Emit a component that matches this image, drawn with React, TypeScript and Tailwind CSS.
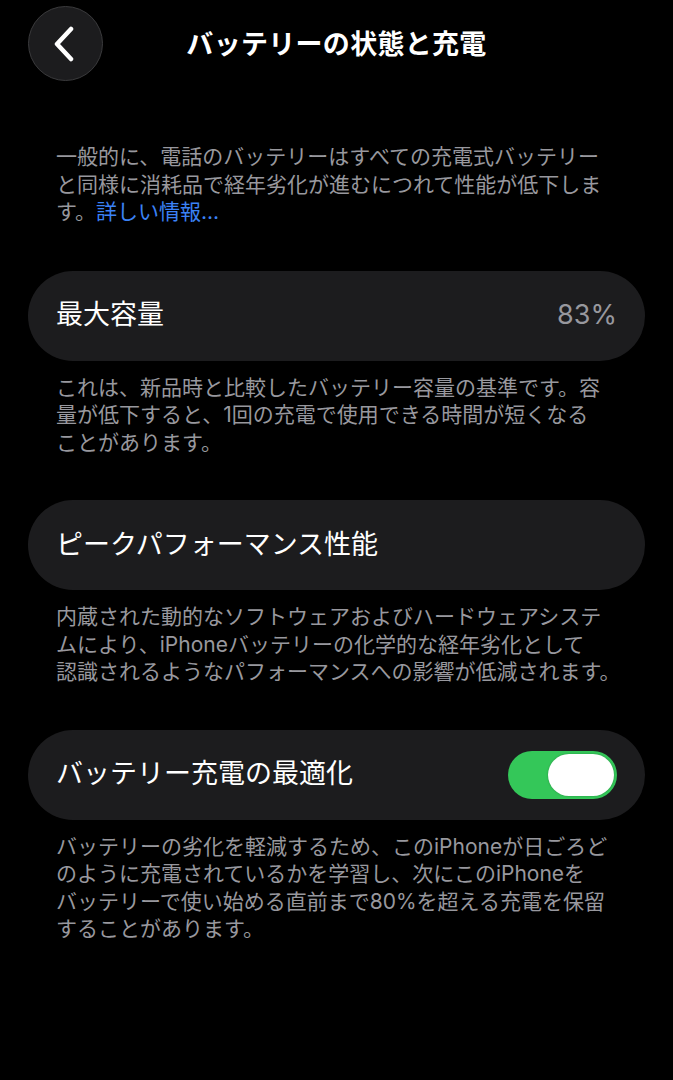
import { Fragment } from 'react';

const font = { fontFamily: 'Inter, "Noto Sans CJK JP", sans-serif' };

function Note({ lines }: { lines: string[] }) {
  return (
    <p className="mt-[13px] px-[56px] text-[21px] leading-[27.5px] whitespace-nowrap text-[#98989e]">
      {lines.map((l, i) => (
        <Fragment key={i}>
          {l}
          {i < lines.length - 1 && <br />}
        </Fragment>
      ))}
    </p>
  );
}

function Toggle({ on }: { on: boolean }) {
  return (
    <div
      className={
        'flex h-[48px] w-[109px] items-center rounded-full p-[3px] ' +
        (on ? 'justify-end bg-[#34c759]' : 'justify-start bg-[#39393d]')
      }
    >
      <div className="h-[42px] w-[66px] rounded-full bg-white shadow-[0_0_2px_rgba(0,0,0,0.3)]" />
    </div>
  );
}

export default function App() {
  return (
    <div className="min-h-[1080px] w-full bg-black text-white" style={font}>
      {/* Header */}
      <header className="relative flex h-[88px] items-center justify-center">
        <button
          className="absolute left-[28px] top-[6px] flex h-[75px] w-[75px] items-center justify-center rounded-full border border-[#3a3a3c] bg-[#1c1c1e]"
          aria-label="戻る"
        >
          <svg width="24" height="36" viewBox="0 0 24 36" className="-ml-[3px]">
            <path d="M19 3 L5 18 L19 33" fill="none" stroke="white" strokeWidth="4.5" strokeLinecap="round" strokeLinejoin="round" />
          </svg>
        </button>
        <h1 className="text-[27px] font-bold leading-none tracking-[0.3px]">バッテリーの状態と充電</h1>
      </header>

      {/* Intro */}
      <p className="mt-[55px] px-[56px] text-[21px] leading-[27.5px] whitespace-nowrap text-[#98989e]">
        一般的に、電話のバッテリーはすべての充電式バッテリー
        <br />
        と同様に消耗品で経年劣化が進むにつれて性能が低下しま
        <br />
        す。<span className="text-[#3b82f6]">詳しい情報...</span>
      </p>

      {/* 最大容量 */}
      <section className="mt-[45px] px-[28px]">
        <div className="flex h-[90px] items-center justify-between rounded-full bg-[#1c1c1e] px-[28px]">
          <span className="text-[27px]">最大容量</span>
          <span className="text-[27px] text-[#98989e]">83%</span>
        </div>
      </section>
      <Note
        lines={[
          'これは、新品時と比較したバッテリー容量の基準です。容',
          '量が低下すると、1回の充電で使用できる時間が短くなる',
          'ことがあります。',
        ]}
      />

      {/* ピークパフォーマンス性能 */}
      <section className="mt-[44px] px-[28px]">
        <div className="flex h-[90px] items-center rounded-full bg-[#1c1c1e] px-[28px]">
          <span className="text-[27px]">ピークパフォーマンス性能</span>
        </div>
      </section>
      <Note
        lines={[
          '内蔵された動的なソフトウェアおよびハードウェアシステ',
          'ムにより、iPhoneバッテリーの化学的な経年劣化として',
          '認識されるようなパフォーマンスへの影響が低減されます。',
        ]}
      />

      {/* バッテリー充電の最適化 */}
      <section className="mt-[44px] px-[28px]">
        <div className="flex h-[90px] items-center justify-between rounded-full bg-[#1c1c1e] pl-[28px] pr-[28px]">
          <span className="text-[27px]">バッテリー充電の最適化</span>
          <Toggle on />
        </div>
      </section>
      <Note
        lines={[
          'バッテリーの劣化を軽減するため、このiPhoneが日ごろど',
          'のように充電されているかを学習し、次にこのiPhoneを',
          'バッテリーで使い始める直前まで80%を超える充電を保留',
          'することがあります。',
        ]}
      />
    </div>
  );
}
